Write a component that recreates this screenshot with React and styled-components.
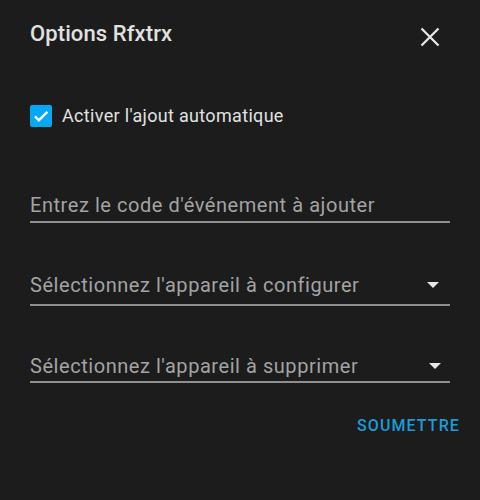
import React from "react";
import styled, { createGlobalStyle } from "styled-components";

const GlobalStyle = createGlobalStyle`
  html, body {
    margin: 0;
    padding: 0;
    background: #1c1c1c;
  }
  body {
    font-family: Roboto, "Noto Sans", "Liberation Sans", sans-serif;
    -webkit-font-smoothing: antialiased;
  }
`;

export default function App() {
  return (
    <>
      <GlobalStyle />
      <Dialog>
        <Header>
          <Title>Options Rfxtrx</Title>
          <CloseButton aria-label="Fermer">
            <svg width="20" height="20" viewBox="0 0 20 20">
              <path
                d="M1.5 1.5 18.5 18.5M18.5 1.5 1.5 18.5"
                stroke="#e6e6e6"
                strokeWidth="2.3"
              />
            </svg>
          </CloseButton>
        </Header>

        <CheckRow>
          <CheckBox>
            <svg width="18" height="18" viewBox="0 0 24 24">
              <path
                d="M4 12.5l5.2 5.2L20.5 6.5"
                fill="none"
                stroke="#ffffff"
                strokeWidth="3.2"
              />
            </svg>
          </CheckBox>
          <CheckLabel>Activer l'ajout automatique</CheckLabel>
        </CheckRow>

        <Field $top={66} $pad={4}>
          <Placeholder>Entrez le code d'événement à ajouter</Placeholder>
        </Field>

        <Field $top={50} $pad={7}>
          <Placeholder>Sélectionnez l'appareil à configurer</Placeholder>
          <Arrow $right={11} />
        </Field>

        <Field $top={48} $pad={3}>
          <Placeholder>Sélectionnez l'appareil à supprimer</Placeholder>
          <Arrow $right={9} />
        </Field>

        <Actions>
          <TextButton>Soumettre</TextButton>
        </Actions>
      </Dialog>
    </>
  );
}

const Dialog = styled.div`
  width: 480px;
  height: 500px;
  box-sizing: border-box;
  padding: 0 30px;
  background: #1c1c1c;
  display: flex;
  flex-direction: column;
  overflow: hidden;
`;

const Header = styled.div`
  display: flex;
  justify-content: space-between;
  align-items: flex-start;
  margin-top: 17px;
  height: 40px;
`;

const Title = styled.h2`
  margin: 3px 0 0;
  font-size: 22px;
  line-height: 28px;
  font-weight: 500;
  color: #e1e1e1;
  letter-spacing: 0.1px;
`;

const CloseButton = styled.button`
  width: 40px;
  height: 40px;
  padding: 0;
  border: none;
  background: transparent;
  display: flex;
  align-items: center;
  justify-content: center;
  cursor: pointer;
`;

const CheckRow = styled.label`
  display: flex;
  align-items: center;
  gap: 10px;
  margin-top: 48px;
  height: 22px;
`;

const CheckBox = styled.span`
  width: 22px;
  height: 22px;
  border-radius: 2px;
  background: #03a9f4;
  display: flex;
  align-items: center;
  justify-content: center;
`;

const CheckLabel = styled.span`
  font-size: 18px;
  line-height: 22px;
  color: #e1e1e1;
  letter-spacing: 0.32px;
`;

const Field = styled.div`
  display: flex;
  align-items: center;
  justify-content: space-between;
  margin-top: ${(p) => p.$top}px;
  padding-bottom: ${(p) => p.$pad}px;
  border-bottom: 2px solid #8f8f8f;
`;

const Placeholder = styled.span`
  font-size: 20px;
  line-height: 24px;
  color: #a3a3a3;
  letter-spacing: 0.55px;
`;

const Arrow = styled.span`
  width: 0;
  height: 0;
  margin-right: ${(p) => p.$right}px;
  border-left: 6px solid transparent;
  border-right: 6px solid transparent;
  border-top: 6px solid #e6e6e6;
`;

const Actions = styled.div`
  display: flex;
  justify-content: flex-end;
  margin: 28px -10px 0 0;
`;

const TextButton = styled.button`
  border: none;
  background: transparent;
  padding: 4px 0;
  font-family: Roboto, "Noto Sans", sans-serif;
  font-size: 16px;
  line-height: 22px;
  font-weight: 500;
  letter-spacing: 1.1px;
  text-transform: uppercase;
  color: #1d9ad9;
  cursor: pointer;
`;
